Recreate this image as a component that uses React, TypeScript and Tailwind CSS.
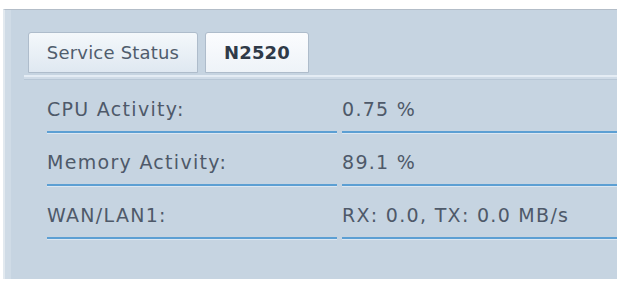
import React from "react";

const rows = [
  { label: "CPU Activity:", value: "0.75 %" },
  { label: "Memory Activity:", value: "89.1 %" },
  { label: "WAN/LAN1:", value: "RX: 0.0, TX: 0.0 MB/s" },
];

export default function App() {
  return (
    <div className="w-[623px] h-[281px] bg-white pt-[9px] pl-[3px] pr-[6px] pb-[2px] overflow-hidden" style={{ fontFamily: '"DejaVu Sans", sans-serif' }}>
      <div className="h-full border-t border-[#b3bdc8] border-l-[2px] border-l-[#e2e9ef] bg-[#c6d4e1] flex flex-col">
        <div className="h-full border-l-[6px] border-l-[#cfdbe6] flex flex-col">
          <div className="pl-[13px] pt-[22px]">
            <div className="flex gap-[7px] pl-[4px]">
              <div className="w-[170px] h-[41px] rounded-t-[3px] border border-[#aebccb] bg-gradient-to-b from-[#f4f8fb] to-[#dfe8f1] flex items-center justify-center text-[18px] tracking-[0.2px] text-[#505d6d]">
                Service Status
              </div>
              <div className="w-[104px] h-[41px] rounded-t-[3px] border border-[#aebccb] bg-gradient-to-b from-[#fbfcfe] to-[#eef3f8] flex items-center justify-center text-[18px] font-bold tracking-[0.2px] text-[#2f3a48]">
                N2520
              </div>
            </div>
            <div className="mt-[2px] h-[5px] border-t-2 border-[#e4ecf4] border-b border-b-[#b8c7d6] bg-[#cfdbe7]" />
          </div>
          <div className="pl-[36px] flex flex-col">
            {rows.map((r, i) => (
              <div key={i} className="flex h-[53px] text-[19px] tracking-[1.3px] text-[#4e5969]">
                <div className="w-[290px] flex items-end pb-[8px] border-b-2 border-[#5c9fd3] shadow-[0_1px_0_#dbe7f2]">
                  {r.label}
                </div>
                <div className="ml-[5px] flex-1 flex items-end pb-[8px] border-b-2 border-[#5c9fd3] shadow-[0_1px_0_#dbe7f2]">
                  {r.value}
                </div>
              </div>
            ))}
          </div>
        </div>
      </div>
    </div>
  );
}
